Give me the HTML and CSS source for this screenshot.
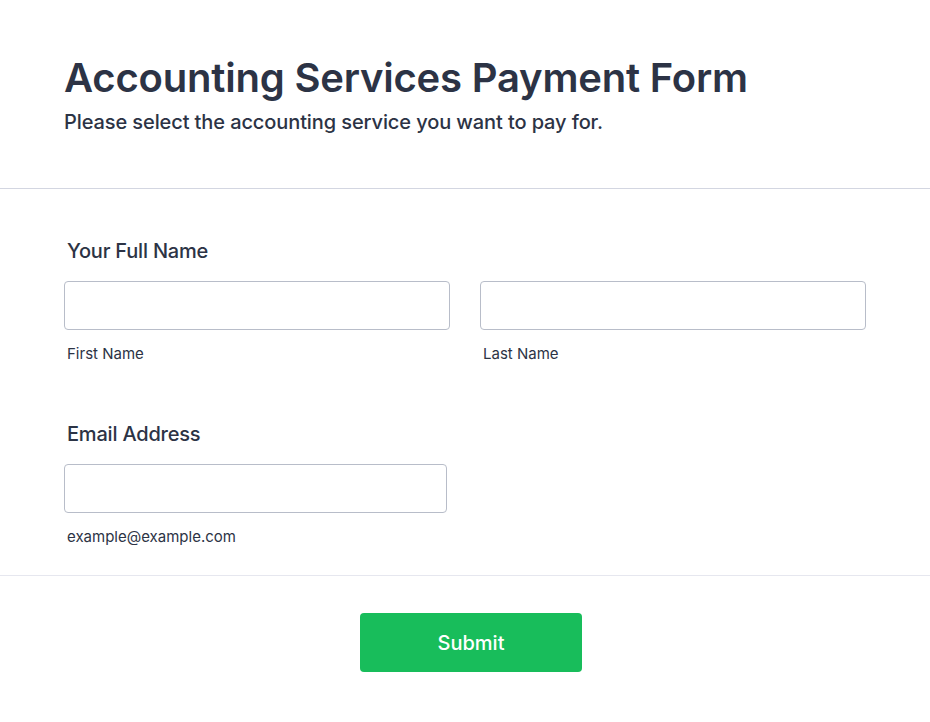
FILE: index.html
```html
<!DOCTYPE html>
<html lang="en">
<head>
    <meta charset="UTF-8">
    <meta name="viewport" content="width=device-width, initial-scale=1.0">
    <link rel="stylesheet" href="styles.css">
    <title>Accounting Services Payment Form</title>
</head>
<body>
    <form class="form">
        <div class="form-header">
            <h1 class="form-title">Accounting Services Payment Form</h1>
            <p class="form-subtitle">Please select the accounting service you want to pay for.</p>
        </div>

        <div class="form-body">
            <div class="field">
                <label class="field-label">Your Full Name</label>
                <div class="name-row">
                    <div class="sub-field">
                        <input class="text-input" type="text">
                        <span class="sub-label">First Name</span>
                    </div>
                    <div class="sub-field">
                        <input class="text-input" type="text">
                        <span class="sub-label">Last Name</span>
                    </div>
                </div>
            </div>

            <div class="field field-email">
                <label class="field-label">Email Address</label>
                <div class="sub-field email-field">
                    <input class="text-input" type="email">
                    <span class="sub-label">example@example.com</span>
                </div>
            </div>
        </div>

        <div class="form-footer">
            <button class="submit-btn" type="button">Submit</button>
        </div>
    </form>
</body>
</html>
```

FILE: styles.css
```css
body{
    margin: 0;
    background: #ffffff;
    font-family: Inter, "Noto Sans", sans-serif;
    color: #2c3345;
}
.form-header{
    padding: 54px 64px 54px;
    border-bottom: 1px solid #d3d6e1;
}
.form-title{
    margin: 0;
    font-size: 40px;
    line-height: 48px;
    font-weight: 600;
    letter-spacing: -0.2px;
}
.form-subtitle{
    margin: 8px 0 0;
    font-size: 20px;
    line-height: 24px;
    font-weight: 500;
    letter-spacing: -0.1px;
}
.form-body{
    padding: 50px 64px 28px;
    border-bottom: 1px solid #e6e7ef;
}
.field-label{
    display: block;
    padding-left: 3px;
    font-size: 20px;
    line-height: 24px;
    font-weight: 500;
    letter-spacing: -0.2px;
    margin-bottom: 18px;
}
.field-email{
    margin-top: 58px;
}
.name-row{
    display: flex;
    gap: 30px;
    width: 802px;
}
.sub-field{
    flex: 1;
    display: flex;
    flex-direction: column;
}
.email-field{
    width: 383px;
}
.text-input{
    box-sizing: border-box;
    height: 49px;
    width: 100%;
    border: 1px solid #b8bdc9;
    border-radius: 4px;
    background: #fff;
    margin: 0;
}
.sub-label{
    margin-top: 14px;
    padding-left: 3px;
    font-size: 15px;
    line-height: 20px;
}
.form-footer{
    display: flex;
    justify-content: center;
    padding: 37px 0 50px 12px;
}
.submit-btn{
    width: 222px;
    height: 59px;
    border: none;
    border-radius: 4px;
    background-color: #18bd5b;
    color: #ffffff;
    font-family: Inter, "Noto Sans", sans-serif;
    font-size: 20px;
    font-weight: 500;
    cursor: pointer;
}
```
